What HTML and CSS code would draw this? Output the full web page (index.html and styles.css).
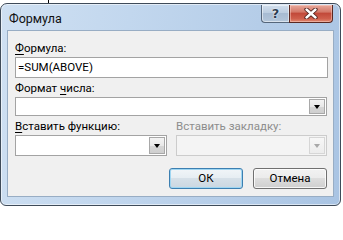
FILE: index.html
```html
<!DOCTYPE html>
<html lang="ru">
<head>
<meta charset="utf-8">
<title>Формула</title>
<link rel="stylesheet" href="styles.css">
</head>
<body>
<div class="desk"></div>
<div class="window">
  <div class="titlebar">
    <span class="title">Формула</span>
    <div class="caption-btns">
      <div class="cbtn help"><span>?</span></div>
      <div class="cbtn close">
        <svg width="14" height="11" viewBox="0 0 14 11">
          <path d="M2.5 1.5 L11.5 9.5 M11.5 1.5 L2.5 9.5" stroke="#4a1f1a" stroke-width="4.2" stroke-linecap="round" fill="none"/>
          <path d="M2.5 1.5 L11.5 9.5 M11.5 1.5 L2.5 9.5" stroke="#ffffff" stroke-width="2.4" stroke-linecap="round" fill="none"/>
        </svg>
      </div>
    </div>
  </div>
  <div class="client">
    <div class="label"><u>Ф</u>ормула:</div>
    <div class="input">=SUM(ABOVE)</div>
    <div class="label gap">Формат <u>ч</u>исла:</div>
    <div class="combo wide"><div class="drop"><i class="tri"></i></div></div>
    <div class="pair">
      <div class="col">
        <div class="label"><u>В</u>ставить функцию:</div>
        <div class="combo tall"><div class="drop"><i class="tri"></i></div></div>
      </div>
      <div class="col disabled">
        <div class="label">Вставить закладку:</div>
        <div class="combo tall"><div class="drop"><i class="tri"></i></div></div>
      </div>
    </div>
    <div class="buttons">
      <div class="btn default">ОК</div>
      <div class="btn">Отмена</div>
    </div>
  </div>
</div>
</body>
</html>
```

FILE: styles.css
```css
html {
  margin: 0;
  padding: 0;
  background: #ffffff;
}
body {
  margin: 0;
  padding: 0;
  background: #ffffff;
  font-family: Roboto, "Noto Sans", sans-serif;
  font-size: 11.5px;
  color: #000;
  width: 343px;
  height: 207px;
  overflow: hidden;
}
.desk {
  height: 3px;
  background: linear-gradient(to right, transparent 48px, #000 48px, #000 49px, transparent 49px);
}
.window {
  box-sizing: border-box;
  width: 341px;
  height: 203px;
  border: 1px solid #3f4b59;
  border-radius: 7px 7px 6px 6px;
  background: linear-gradient(100deg, #cfe0f2 0%, #c2d7ee 35%, #b5cde8 70%, #a9c4e3 100%);
  box-shadow: inset 0 0 0 1px rgba(255,255,255,0.55);
  padding: 0 6px 8px 6px;
}
.titlebar {
  height: 26px;
  display: flex;
  align-items: flex-start;
  justify-content: space-between;
  margin: 0 -6px;
  padding: 0 7px 0 8px;
}
.title {
  font-size: 12.5px;
  line-height: 14px;
  margin-top: 8px;
  color: #111;
}
.caption-btns {
  display: flex;
  margin-top: 1px;
}
.cbtn {
  box-sizing: border-box;
  height: 18px;
  display: flex;
  align-items: center;
  justify-content: center;
  border: 1px solid #55667a;
  border-top: none;
}
.help {
  width: 28px;
  border-radius: 0 0 0 4px;
  border-right: none;
  background: linear-gradient(#d2dfed 0%, #bccde0 45%, #a7bbd2 50%, #b4c6da 100%);
  box-shadow: inset 0 0 0 1px rgba(255,255,255,0.5);
}
.help span {
  font-family: "DejaVu Sans", sans-serif;
  font-weight: bold;
  font-size: 13px;
  line-height: 13px;
  color: #2d3e52;
  text-shadow: 0 0 2px #fff, 0 0 1px #fff;
}
.close {
  width: 44px;
  border-radius: 0 0 4px 0;
  border-color: #5a2821;
  background: linear-gradient(#e8a99c 0%, #d47a6a 40%, #c24a3a 50%, #cf5f4c 80%, #e08a72 100%);
  box-shadow: inset 0 0 0 1px rgba(255,220,210,0.45);
}
.client {
  box-sizing: border-box;
  height: 167px;
  background: #f0f0f0;
  border: 1px solid #98adc4;
  padding: 10px 6px 0 7px;
}
.label {
  height: 15px;
  line-height: 15px;
  white-space: nowrap;
}
.label u {
  text-underline-offset: 2px;
}
.label.gap {
  margin-top: 3px;
}
.input {
  box-sizing: border-box;
  width: 313px;
  height: 21px;
  margin-top: 1px;
  background: #fff;
  border: 1px solid #a3a3a3;
  padding-left: 2px;
  line-height: 19px;
  white-space: nowrap;
}
.combo {
  box-sizing: border-box;
  height: 19px;
  margin-top: 1px;
  background: #fff;
  border: 1px solid #a3a3a3;
  display: flex;
  justify-content: flex-end;
  padding: 1px;
}
.combo.wide {
  width: 312px;
}
.combo.tall {
  height: 21px;
}
.drop {
  box-sizing: border-box;
  width: 16px;
  height: 100%;
  border: 1px solid #a8a8a8;
  background: linear-gradient(#f3f3f3 0%, #e8e8e8 50%, #d6d6d6 51%, #cfcfcf 100%);
  display: flex;
  align-items: center;
  justify-content: center;
}
.tri {
  width: 0;
  height: 0;
  border-left: 3.5px solid transparent;
  border-right: 3.5px solid transparent;
  border-top: 4px solid #000;
}
.pair {
  display: grid;
  grid-template-columns: 152px 151px;
  column-gap: 9px;
  margin-top: 3px;
}
.pair .combo {
  margin-top: 1px;
}
.disabled .label {
  color: #8d8d8d;
}
.disabled .combo {
  border-color: #cccccc;
  background: #f4f4f4;
}
.disabled .drop {
  border-color: #d6d6d6;
  background: linear-gradient(#f7f7f7, #ececec);
}
.disabled .tri {
  border-top-color: #a8a8a8;
}
.buttons {
  display: flex;
  justify-content: flex-end;
  column-gap: 10px;
  margin-top: 12px;
}
.btn {
  box-sizing: border-box;
  width: 74px;
  height: 21px;
  border: 1px solid #707070;
  border-radius: 3px;
  background: linear-gradient(#f2f2f2 0%, #ebebeb 49%, #dddddd 50%, #cfcfcf 100%);
  box-shadow: inset 0 0 0 1px rgba(255,255,255,0.8);
  text-align: center;
  line-height: 19px;
}
.btn.default {
  border-color: #3c7fb1;
  box-shadow: inset 0 0 0 1px #9fd6f2;
  background: linear-gradient(#f1f5f8 0%, #e6edf2 49%, #d6e0e8 50%, #cbd7e1 100%);
}
```
